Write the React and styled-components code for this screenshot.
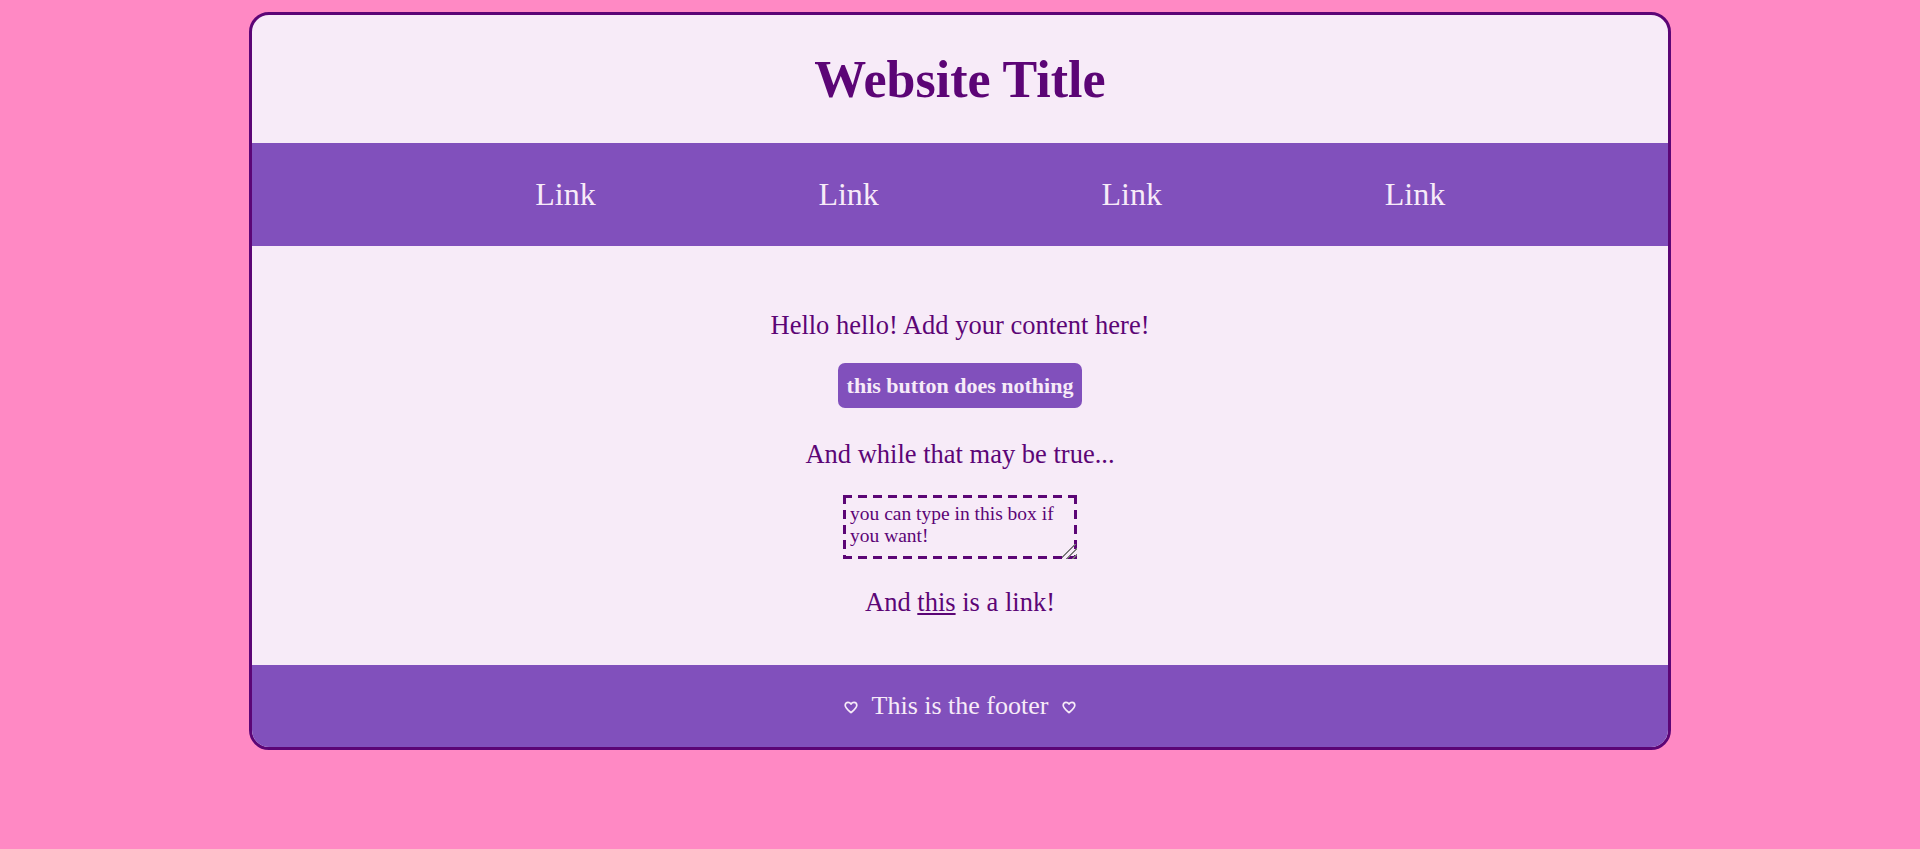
import React from "react";
import styled, { createGlobalStyle } from "styled-components";

const GlobalStyle = createGlobalStyle`
  body {
    margin: 0;
    background: #ff89c4;
    font-family: "Liberation Serif", "DejaVu Serif", serif;
  }
`;

const links = ["Link", "Link", "Link", "Link"];

const HeartIcon = () => (
  <HeartSvg viewBox="0 0 14 13" aria-hidden="true">
    <path
      d="M7 11.6 C4.4 9.4 1.2 7 1.2 4.3 C1.2 2.6 2.5 1.3 4 1.3 C5.3 1.3 6.4 2.1 7 3.2 C7.6 2.1 8.7 1.3 10 1.3 C11.5 1.3 12.8 2.6 12.8 4.3 C12.8 7 9.6 9.4 7 11.6 Z"
      fill="none"
      stroke="currentColor"
      strokeWidth="1.7"
      strokeLinejoin="round"
    />
  </HeartSvg>
);

const App = () => {
  return (
    <>
      <GlobalStyle />
      <Page>
        <Card>
          <Header>
            <Title>Website Title</Title>
          </Header>
          <Nav>
            {links.map((label, index) => (
              <NavLink key={index} href="#">
                {label}
              </NavLink>
            ))}
          </Nav>
          <Main>
            <Text>Hello hello! Add your content here!</Text>
            <Button>this button does nothing</Button>
            <Text $gap={31}>And while that may be true...</Text>
            <TextBox defaultValue="you can type in this box if you want!" />
            <Text $gap={28}>
              And <InlineLink href="#">this</InlineLink> is a link!
            </Text>
          </Main>
          <Footer>
            <HeartIcon />
            <span>This is the footer</span>
            <HeartIcon />
          </Footer>
        </Card>
      </Page>
    </>
  );
};

export default App;

const Page = styled.div`
  padding-top: 12px;
  padding-bottom: 97px;
`;

const Card = styled.div`
  width: 1422px;
  box-sizing: border-box;
  margin: 0 auto;
  border: 3px solid #5c0576;
  border-radius: 20px;
  overflow: hidden;
  background: #f7ebf8;
`;

const Header = styled.header`
  height: 128px;
  display: flex;
  align-items: center;
  justify-content: center;
`;

const Title = styled.h1`
  margin: 0;
  font-size: 52px;
  font-weight: 700;
  color: #5c0576;
`;

const Nav = styled.nav`
  height: 103px;
  background: #8150bc;
  display: flex;
  align-items: center;
  justify-content: space-evenly;
  padding-left: 60px;
`;

const NavLink = styled.a`
  font-size: 32px;
  color: #f7ebf8;
  text-decoration: none;
  width: 60px;
  text-align: center;
  white-space: nowrap;
`;

const Main = styled.main`
  height: 419px;
  box-sizing: border-box;
  padding-top: 64px;
  display: flex;
  flex-direction: column;
  align-items: center;
`;

const Text = styled.p`
  margin: ${(props) => props.$gap || 0}px 0 0;
  font-size: 26.5px;
  line-height: 31px;
  color: #5c0576;
`;

const Button = styled.button`
  margin-top: 22px;
  width: 244px;
  height: 45px;
  border: none;
  border-radius: 7px;
  background: #8150bc;
  color: #f7ebf8;
  font-family: "Liberation Serif", "DejaVu Serif", serif;
  font-size: 22px;
  font-weight: 700;
  cursor: pointer;
`;

const dash = "#5c0576 0 9px, transparent 9px 15px";

const TextBox = styled.textarea`
  margin-top: 25px;
  width: 234px;
  height: 64px;
  box-sizing: border-box;
  padding: 8px 7px;
  border: none;
  background:
    repeating-linear-gradient(90deg, ${dash}) left top / 100% 3px no-repeat,
    repeating-linear-gradient(90deg, ${dash}) left bottom / 100% 3px no-repeat,
    repeating-linear-gradient(180deg, ${dash}) left top / 3px 100% no-repeat,
    repeating-linear-gradient(180deg, ${dash}) right top / 3px 100% no-repeat;
  color: #5c0576;
  font-family: "Liberation Serif", "DejaVu Serif", serif;
  font-size: 19.5px;
  line-height: 22px;
  outline: none;
  resize: both;

  &::-webkit-resizer {
    background: linear-gradient(
      135deg,
      transparent 0 40%,
      #777 40% 47%,
      transparent 47% 60%,
      #777 60% 67%,
      transparent 67% 80%,
      #777 80% 87%,
      transparent 87%
    );
  }
`;

const InlineLink = styled.a`
  color: #5c0576;
  text-decoration: underline;
`;

const Footer = styled.footer`
  height: 82px;
  background: #8150bc;
  display: flex;
  align-items: center;
  justify-content: center;
  gap: 14px;
  color: #f7ebf8;
  font-size: 26px;
`;

const HeartSvg = styled.svg`
  width: 14px;
  height: 13px;
  color: #f7ebf8;
  margin-top: 2px;
`;
